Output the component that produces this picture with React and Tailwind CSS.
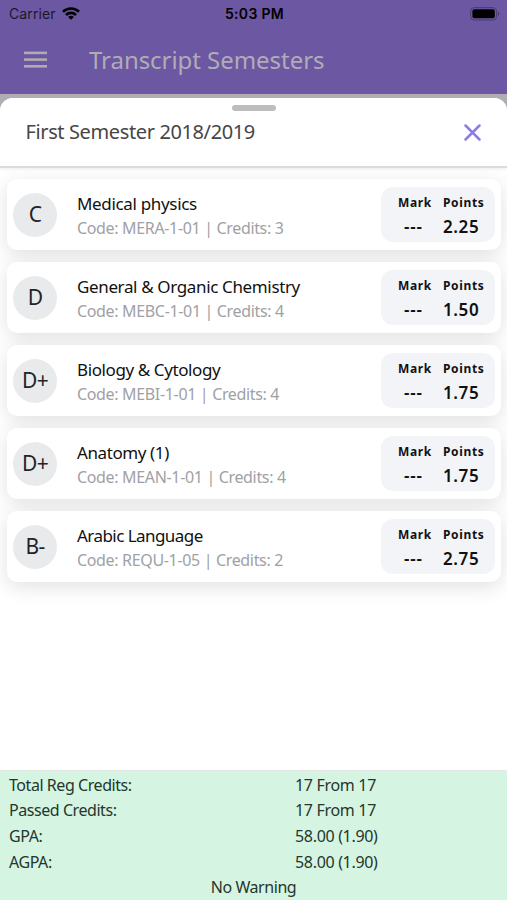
const courses = [
  { grade: "C", name: "Medical physics", code: "MERA-1-01", credits: 3, points: "2.25", nameTracking: "tracking-[-0.33px]" },
  { grade: "D", name: "General & Organic Chemistry", code: "MEBC-1-01", credits: 4, points: "1.50", nameTracking: "tracking-[-0.36px]" },
  { grade: "D+", name: "Biology & Cytology", code: "MEBI-1-01", credits: 4, points: "1.75", nameTracking: "tracking-[-0.4px]" },
  { grade: "D+", name: "Anatomy (1)", code: "MEAN-1-01", credits: 4, points: "1.75", nameTracking: "tracking-[-0.4px]" },
  { grade: "B-", name: "Arabic Language", code: "REQU-1-05", credits: 2, points: "2.75", nameTracking: "tracking-[-0.55px]" },
];

const totals = [
  { label: "Total Reg Credits:", value: "17 From 17" },
  { label: "Passed Credits:", value: "17 From 17" },
  { label: "GPA:", value: "58.00 (1.90)" },
  { label: "AGPA:", value: "58.00 (1.90)" },
];

function StatusBar() {
  return (
    <div className="grid grid-cols-3 items-center h-[27px] pl-[9px] pr-[7px] text-black font-['Inter',sans-serif]">
      <div className="flex items-center gap-[6px]">
        <span className="text-[14px] tracking-[0.1px] text-[#1c172b]">Carrier</span>
        <svg width="18" height="13" viewBox="0 0 18 13" fill="none" stroke="#000" strokeWidth="2.7">
          <path d="M1 4.7C5.5 0.4 12.5 0.4 17 4.7" />
          <path d="M4 7.9C6.8 5.3 11.2 5.3 14 7.9" />
          <path d="M9 12.8L6.1 9.9C7.8 8.5 10.2 8.5 11.9 9.9Z" fill="#000" stroke="none" />
        </svg>
      </div>
      <span className="text-[14px] leading-5 font-semibold text-center tracking-[0.3px]">5:03 PM</span>
      <svg className="justify-self-end" width="30" height="14" viewBox="0 0 30 14">
        <rect x="0.6" y="0.6" width="26" height="12.4" rx="3.6" fill="none" stroke="#4b3c73" />
        <rect x="2.4" y="2.3" width="22.4" height="9" rx="2" fill="#000" />
        <path d="M28 4.8C29.6 5.5 29.6 8.1 28 8.8Z" fill="#43366a" />
      </svg>
    </div>
  );
}

function AppBar() {
  return (
    <header className="flex items-center h-[65px] pl-6 text-[#b1acb4]">
      <svg width="23" height="17" viewBox="0 0 23 17" fill="currentColor">
        <rect y="0.6" width="23" height="2.6" />
        <rect y="7.3" width="23" height="2.6" />
        <rect y="14" width="23" height="2.6" />
      </svg>
      <h1 className="ml-[42px] text-[24px] leading-[30px] tracking-[-0.05px]">Transcript Semesters</h1>
    </header>
  );
}

function CourseCard({ course }) {
  return (
    <li className="flex items-center h-[71px] pl-[6px] pr-[6px] bg-white rounded-[10px] shadow-[0_5px_20px_rgba(0,0,0,0.12)]">
      <div className="flex items-center justify-center size-[44px] rounded-full bg-[#e9eaec] text-[21px] tracking-[-0.6px] text-[#222428]">
        {course.grade}
      </div>
      <div className="ml-5 mt-[2px] flex-1 whitespace-nowrap">
        <p className={"text-[17px] leading-6 text-[#111] " + course.nameTracking}>{course.name}</p>
        <p className="text-[16px] leading-6 text-[#a0a1a5] tracking-[-0.34px]">
          Code: {course.code} | Credits: {course.credits}
        </p>
      </div>
      <div className="grid grid-cols-[33px_41px] gap-x-3 justify-center content-center w-[114px] h-[55px] pl-[6px] rounded-[12px] bg-[#f3f4f8] text-[#111] whitespace-nowrap">
        <span className="text-[12px] leading-[23px] font-bold tracking-[0.6px]">Mark</span>
        <span className="text-[12px] leading-[23px] font-bold tracking-[0.65px]">Points</span>
        <span className="pl-[6px] text-[17px] leading-[25px] font-semibold tracking-[0.8px]">---</span>
        <span className="text-[17px] leading-[25px] font-semibold tracking-[0.6px]">{course.points}</span>
      </div>
    </li>
  );
}

export default function App() {
  return (
    <div className="flex flex-col w-[507px] h-[900px] overflow-hidden bg-[#b0aeb2] font-['Noto_Sans',sans-serif]">
      <div className="h-[94px] shrink-0 bg-[#6b57a2]">
        <StatusBar />
        <AppBar />
      </div>

      <section className="flex flex-col flex-1 mt-1 bg-white rounded-t-[13px] overflow-hidden">
        <div className="relative z-10 h-[70px] shrink-0 bg-white border-b-2 border-[#dcdcdc] shadow-[0_1px_3px_rgba(0,0,0,0.08)]">
          <div className="w-11 h-[6px] mx-auto mt-[7px] rounded-full bg-[#bdbdbd]" />
          <div className="flex items-center justify-between h-[42px] pl-[25.5px] pr-[26px]">
            <h2 className="text-[20px] text-[#464646] tracking-[-0.38px]">First Semester 2018/2019</h2>
            <svg width="17" height="17" viewBox="0 0 17 17" stroke="#8d7be6" strokeWidth="2.5" strokeLinecap="round">
              <path d="M1.5 1.5L15.5 15.5M15.5 1.5L1.5 15.5" />
            </svg>
          </div>
        </div>

        <ul className="flex flex-col gap-3 pt-[11px] pl-[7px] pr-[6px]">
          {courses.map((course) => (
            <CourseCard key={course.code} course={course} />
          ))}
        </ul>

        <footer className="mt-auto h-[130px] pt-px border-t border-[#e2e6e3] bg-[#d5f5e2] text-[16px] text-[#26352d] tracking-[-0.44px]">
          {totals.map((row) => (
            <div key={row.label} className="flex h-[25.6px] items-center pl-[9px]">
              <span className="w-[286px]">{row.label}</span>
              <span className="tracking-[-0.32px]">{row.value}</span>
            </div>
          ))}
          <p className="flex h-[25.6px] items-center justify-center">No Warning</p>
        </footer>
      </section>
    </div>
  );
}
